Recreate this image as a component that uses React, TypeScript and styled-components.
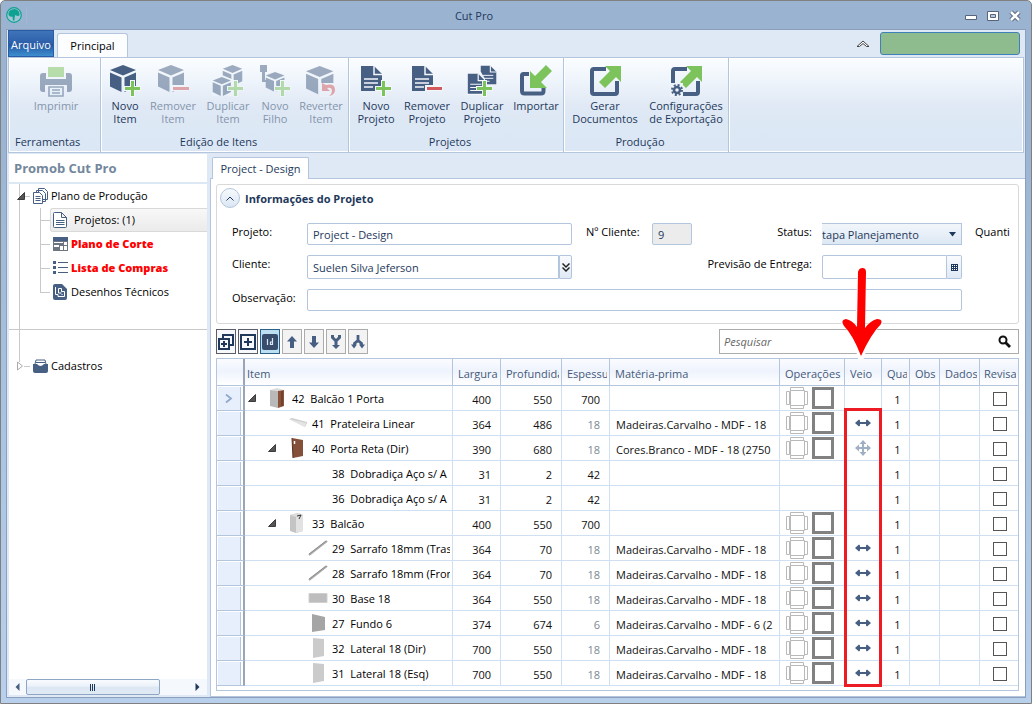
import React from "react";
import styled, { createGlobalStyle, css } from "styled-components";

const NAVY = "#465f82";
const GREEN = "#7cc35c";
const RED = "#d25a5e";
const INK = "#1e395b";
const LINE = "#b3c6de";
const CELL = "#cfe0f3";

const Global = createGlobalStyle`
  * { box-sizing: border-box; }
  body { margin: 0; font: 11px/16px "Open Sans", "Noto Sans", sans-serif; color: #000; }
  button, input, select { font: inherit; color: inherit; margin: 0; padding: 0; }
  button { background: none; border: 0; }
  svg { display: block; flex: none; }
`;

/* ---------- window frame ---------- */

const Window = styled.div`
  min-height: 100vh;
  display: flex;
  flex-direction: column;
  border: 1px solid #808080;
  border-radius: 5px 5px 0 0;
  background: linear-gradient(#9ab3d1, #9bb4d2 20%, #a9c3e0 60%, #b9d0ec);
`;

const TitleBar = styled.header`
  display: flex;
  align-items: center;
  height: 28px;
`;

const AppBadge = styled.div`
  width: 26px;
  padding-left: 5px;
  border-right: 1px solid #a3b9d3;
`;

const Title = styled.h1`
  flex: 1;
  margin: 2px 0 0;
  text-align: center;
  font-size: 11px;
  font-weight: 400;
  color: ${INK};
`;

const WindowButtons = styled.div`
  width: 110px;
  display: flex;
  justify-content: flex-end;
  gap: 8px;
  padding: 2px 9px 0 0;
  button { display: flex; }
`;

const Client = styled.div`
  flex: 1;
  display: flex;
  flex-direction: column;
  margin: 0 5px 5px;
  border: 1px solid #8c9fbe;
  background: #dfe9f5;
`;

/* ---------- ribbon ---------- */

const TabStrip = styled.nav`
  display: flex;
  height: 27px;
  padding: 0 5px 0 1px;
`;

const FileTab = styled.button`
  width: 46px;
  padding-top: 2px;
  border: 1px solid #2a5ca6;
  color: #fff;
  background: linear-gradient(#3e74b8, #2c5fa9 50%, #2453a0 52%, #3d8fce);
`;

const MainTab = styled.button`
  width: 71px;
  margin: 3px 0 0 3px;
  border: 1px solid ${LINE};
  border-bottom: 0;
  border-radius: 3px 3px 0 0;
  background: #fcfdff;
`;

const Chevron = styled.button`
  display: flex;
  align-self: center;
  margin: 0 10px 0 auto;
`;

const StatusBox = styled.div`
  width: 140px;
  height: 23px;
  margin-top: 2px;
  border: 1px solid #3f80b8;
  border-radius: 3px;
  background: #8fbc8f;
`;

const Ribbon = styled.div`
  display: flex;
  height: 96px;
  margin: 0 1px;
  border: 1px solid ${LINE};
  box-shadow: inset 0 0 0 1px #fff;
  background: linear-gradient(#fbfdff, #eef4fb 25%, #e0e9f5 50%, #dde8f5 70%, #dbe7f5);
`;

const Group = styled.section<{ $w: number }>`
  width: ${(p) => p.$w}px;
  display: flex;
  flex-direction: column;
  border-right: 1px solid ${LINE};
  box-shadow: 1px 0 #fff;
`;

const GroupButtons = styled.div`
  flex: 1;
  display: flex;
  gap: 2px;
  padding-left: 4px;
`;

const GroupName = styled.h2<{ $left?: boolean }>`
  margin: 0;
  padding: ${(p) => (p.$left ? "0 0 2px 6px" : "0 12px 2px 0")};
  text-align: ${(p) => (p.$left ? "left" : "center")};
  font-size: 11px;
  line-height: 16px;
  font-weight: 400;
  color: ${INK};
`;

const Tool = styled.button<{ $w: number }>`
  width: ${(p) => p.$w}px;
  flex: none;
  display: flex;
  flex-direction: column;
  align-items: center;
  padding-top: 7px;
  line-height: 13px;
  color: ${INK};
  white-space: pre;
  text-align: center;
  &:disabled { color: #8595ab; }
  &:disabled svg { opacity: 0.5; }
  span { padding-top: 2px; }
`;

/* ---------- side tree ---------- */

const Work = styled.div`
  flex: 1;
  display: flex;
`;

const Side = styled.aside`
  width: 198px;
  flex: none;
  margin: 1px 3px 2px 2px;
  display: flex;
  flex-direction: column;
  background: #fff;
`;

const SideTitle = styled.h2`
  margin: 0;
  height: 30px;
  padding-left: 5px;
  border-bottom: 2px solid #dde8f5;
  font-size: 13px;
  line-height: 28px;
  font-weight: 700;
  color: #73879c;
`;

const Tree = styled.ul`
  list-style: none;
  margin: 0;
  padding: 0;
  flex: 1;
`;

const guide = "linear-gradient(#c9c9c9, #c9c9c9)";

const TreeRoot = styled.li<{ $last?: boolean }>`
  ${(p) =>
    p.$last
      ? css`
          padding-top: 24px;
          background: ${guide} 10px 0 / 1px 32px no-repeat;
        `
      : css`
          height: 146px;
          border-bottom: 1px solid #c9c9c9;
          background: ${guide} 10px 0 / 1px 100% no-repeat;
        `}
`;

const RootRow = styled.div`
  display: flex;
  align-items: center;
  height: 24px;
  padding-left: 8px;
  gap: 3px;
`;

const Twig = styled.button`
  display: flex;
  align-items: center;
  width: 13px;
  height: 16px;
  background: ${guide} 100% 50% / 6px 1px no-repeat;
`;

const Branch = styled.ul`
  list-style: none;
  margin: 0;
  padding: 0 0 0 31px;
`;

const Leaf = styled.li<{ $end?: boolean }>`
  display: flex;
  height: 24px;
  padding-left: 10px;
  background: ${guide} 0 0 / 1px ${(p) => (p.$end ? "12px" : "100%")} no-repeat,
    ${guide} 0 50% / 10px 1px no-repeat;
`;

const LeafLink = styled.a<{ $on?: boolean; $alert?: boolean }>`
  flex: 1;
  display: flex;
  align-items: center;
  gap: ${(p) => (p.$on ? 6 : 3)}px;
  padding-left: 2px;
  border: 1px solid transparent;
  border-right: 0;
  border-radius: 3px 0 0 3px;
  text-decoration: none;
  color: #000;
  ${(p) => p.$alert && css`color: #f00; font-weight: 800;`}
  ${(p) => p.$on && css`border-color: #d9d9d9; background: linear-gradient(#f8f8f8, #ebebeb);`}
`;

const ScrollBar = styled.div`
  display: flex;
  align-items: center;
  height: 16px;
  padding: 0 7px 0 6px;
  background: #f5f8fd;
`;

const ScrollThumb = styled.div`
  width: 134px;
  height: 16px;
  margin: 0 auto 0 6px;
  display: flex;
  justify-content: center;
  align-items: center;
  border: 1px solid #8fa5c4;
  border-radius: 2px;
  background: linear-gradient(#fafcff, #eaf1f9 45%, #dce7f3 50%, #e0eaf5);
`;

/* ---------- main panel ---------- */

const Main = styled.main`
  flex: 1;
  min-width: 0;
  display: flex;
  flex-direction: column;
`;

const DocTabs = styled.div`
  display: flex;
  height: 26px;
  padding: 4px 0 0 2px;
  border-bottom: 1px solid ${LINE};
`;

const DocTab = styled.button`
  height: 22px;
  width: 97px;
  border: 1px solid ${LINE};
  border-bottom: 0;
  border-radius: 2px 2px 0 0;
  background: #fff;
  color: ${INK};
`;

const Page = styled.div`
  position: relative;
  flex: 1;
  padding: 5px 6px 5px 5px;
  border-left: 1px solid ${LINE};
  border-bottom: 1px solid ${LINE};
  background: #fff;
`;

const Card = styled.section`
  border: 1px solid #d9d9d9;
  border-radius: 3px;
  padding: 0 7px 12px 15px;
`;

const CardHead = styled.div`
  display: flex;
  align-items: center;
  gap: 5px;
  height: 26px;
  margin: 0 0 12px -12px;
  h2 { margin: 2px 0 0; font-size: 11px; font-weight: 700; color: ${INK}; }
`;

const Round = styled.button`
  display: flex;
  align-items: center;
  justify-content: center;
  width: 20px;
  height: 20px;
  border: 1px solid ${LINE};
  border-radius: 50%;
  background: linear-gradient(#f7fafd, #dbe6f3);
`;

const Form = styled.form`
  display: grid;
  grid-template-columns: 75px minmax(0, 1fr) 80px 40px 130px 140px 49px;
  grid-template-rows: 22px 24px 22px;
  row-gap: 10px;
`;

const Label = styled.label<{ $col?: number; $pad?: number; $right?: boolean }>`
  grid-column-start: ${(p) => p.$col ?? 1};
  padding-left: ${(p) => p.$pad ?? 0}px;
  padding-right: ${(p) => (p.$right ? 10 : 0)}px;
  text-align: ${(p) => (p.$right ? "right" : "left")};
  line-height: 18px;
  white-space: nowrap;
  overflow: hidden;
`;

const field = css`
  width: 100%;
  min-width: 0;
  height: 100%;
  border: 1px solid ${LINE};
  border-radius: 2px;
  background: #fff;
  color: ${INK};
  padding: 1px 5px 0;
  outline: 0;
`;

const Field = styled.input`
  ${field}
  &:read-only { background: #ececec; }
`;

const WideField = styled(Field)`
  grid-column: 2 / 7;
`;

const Split = styled.div`
  display: flex;
  ${Field} { flex: 1; border-radius: 2px 0 0 2px; }
`;

const SplitButton = styled.button<{ $w: number }>`
  width: ${(p) => p.$w}px;
  display: flex;
  align-items: center;
  justify-content: center;
  border: 1px solid ${LINE};
  border-left-width: ${(p) => (p.$w > 14 ? 0 : 1)}px;
  border-radius: 0 2px 2px 0;
  background: linear-gradient(#f9fbfe, #dfe9f5);
`;

const SelectBox = styled.div`
  display: flex;
  align-items: center;
  border: 1px solid ${LINE};
  border-left: 0;
  padding-right: 4px;
  background: linear-gradient(#f2f6fb, #dde8f4);
`;

const Select = styled.select`
  flex: 1;
  min-width: 0;
  height: 20px;
  padding-top: 2px;
  border: 0;
  outline: 0;
  appearance: none;
  background: none;
  color: ${INK};
  text-indent: -6px;
  overflow: hidden;
`;

const ToolRow = styled.div`
  display: flex;
  gap: 2px;
  height: 25px;
  margin: 5px 0 4px;
`;

const Square = styled.button<{ $kind: "dark" | "on" | "soft" }>`
  display: flex;
  align-items: center;
  justify-content: center;
  width: 20px;
  border: 1px solid ${(p) => ({ dark: "#5d5d66", on: "#2b6088", soft: "#acacac" })[p.$kind]};
  background: ${(p) => ({ dark: "#f6f8fb", on: "#bcdff2", soft: "#f3f3f3" })[p.$kind]};
`;

const Search = styled.label`
  display: flex;
  align-items: center;
  width: 300px;
  margin-left: auto;
  padding: 0 7px 0 4px;
  border: 1px solid #acacac;
  input { flex: 1; min-width: 0; border: 0; outline: 0; background: none; font-style: italic; }
  input::placeholder { color: #666; opacity: 1; }
`;

/* ---------- grid ---------- */

const GridBox = styled.div`
  position: relative;
  border: 1px solid ${LINE};
  padding-bottom: 4px;
`;

const Table = styled.table`
  width: 100%;
  table-layout: fixed;
  border-collapse: separate;
  border-spacing: 0;
`;

const Th = styled.th<{ $first?: boolean }>`
  height: 27px;
  padding: 4px 2px 0 ${(p) => (p.$first ? 2 : 5)}px;
  border-right: 1px solid ${LINE};
  border-bottom: 1px solid ${LINE};
  background: linear-gradient(#fbfcff, #eef3fd 45%, #fff);
  text-align: left;
  font-weight: 400;
  color: #44597a;
  white-space: nowrap;
  overflow: hidden;
  &:last-child { border-right: 0; padding-left: 4px; }
`;

const Td = styled.td<{ $align?: string; $dim?: boolean }>`
  height: 25px;
  padding: ${(p) => (p.$align === "right" ? "3px 9px 0 2px" : p.$align === "center" ? "3px 0 0 4px" : "3px 3px 0 6px")};
  border-right: 1px solid ${CELL};
  border-bottom: 1px solid ${CELL};
  text-align: ${(p) => p.$align ?? "left"};
  color: ${(p) => (p.$dim ? "#7c8794" : "#111")};
  white-space: nowrap;
  overflow: hidden;
  &:last-child { border-right: 0; }
`;

const Clip = styled.div`
  overflow: hidden;
`;

const MarkHead = styled(Th)`
  border-right: 2px solid #9aa5b8;
  padding: 0;
`;

const Mark = styled.td`
  padding: 1px 2px 0 1px;
  border-right: 2px solid #9aa5b8;
  border-bottom: 1px solid ${LINE};
  div {
    display: flex;
    align-items: center;
    justify-content: center;
    height: 23px;
    border-right: 1px solid ${LINE};
    background: #e7eefc;
  }
`;

const IconTd = styled(Td)`
  padding: 0 0 0 6px;
`;

const CenterTd = styled(Td)`
  padding: 0;
  svg { margin: 0 auto; }
`;

const CheckTd = styled(Td)`
  padding: 1px 0 0 13px;
`;

const IconPair = styled.div`
  display: flex;
  align-items: center;
  gap: 3px;
`;

const TreeTd = styled(Td)`
  padding: 0 2px 0 3px;
`;

const ItemCell = styled.div<{ $level: number }>`
  display: flex;
  align-items: center;
  height: 24px;
  padding-left: ${(p) => p.$level * 20}px;
  overflow: hidden;
  color: #000;
`;

const Slot = styled.span`
  display: flex;
  flex: none;
  width: 20px;
  align-items: center;
`;

const ItemName = styled.span<{ $bare?: boolean }>`
  padding: 2px 0 0 ${(p) => (p.$bare ? 44 : 4)}px;
  white-space: pre;
`;

const Check = styled.input`
  appearance: none;
  display: block;
  width: 14px;
  height: 14px;
  margin: 0;
  border: 1px solid #555;
  background: #fff;
`;

const Highlight = styled.div`
  position: absolute;
  right: 136px;
  top: 49px;
  bottom: 3px;
  width: 38px;
  border: 3px solid #ed1c24;
  pointer-events: none;
`;

const Pointer = styled.svg`
  position: absolute;
  right: 142px;
  top: 88px;
  pointer-events: none;
`;

/* ---------- drawings ---------- */

const Plus = ({ x, y }: { x: number; y: number }) => (
  <g transform={`translate(${x} ${y})`}>
    <path d="M5 -1h5v6h6v5h-6v6H5v-6H-1V5h6z" fill="#f3f7fc" />
    <path d="M6 0h3v6h6v3H9v6H6V9H0V6h6z" fill={GREEN} />
  </g>
);

const Cube = ({ x = 0, y = 0, s = 1 }) => (
  <g transform={`translate(${x} ${y}) scale(${s})`} fill={NAVY}>
    <path d="M14 0L27 5 14 10.500 1 5z" />
    <path d="M1 7.500L12.500 12.500V27L1 21.500z" />
    <path d="M27 7.500L15.500 12.500V27L27 21.500z" />
  </g>
);

const Doc = ({ x = 0, y = 0, s = 1 }) => (
  <g transform={`translate(${x} ${y}) scale(${s})`}>
    <path d="M1 1H14L22 9V26H1z" fill={NAVY} />
    <path d="M14 1V9.500H22" fill="none" stroke="#f3f7fc" strokeWidth="1.500" />
    <path d="M4 14H18M4 18H18M4 22H13" stroke="#f3f7fc" strokeWidth="1.300" />
  </g>
);

const Ico = ({ children }: { children: React.ReactNode }) => (
  <svg width="32" height="32" viewBox="0 0 32 32">{children}</svg>
);

const PrintIcon = () => (
  <Ico>
    <path d="M3 8h3v6h20V8h3q3 0 3 3v13q0 3-3 3h-2v-7H5v7H3q-3 0-3-3V11q0-3 3-3z" fill={NAVY} />
    <path d="M8 2h16v10H8z" fill={GREEN} />
    <path d="M9 22h14v9H9zM12 25h8M12 28h8" fill="none" stroke={NAVY} strokeWidth="1.600" />
  </Ico>
);
const NewItem = () => <Ico><Cube /><Plus x={16} y={16} /></Ico>;
const RemoveItem = () => <Ico><Cube /><path d="M14 20h18v6H14z" fill="#f3f7fc" /><path d="M16 22h16v3H16z" fill={RED} /></Ico>;
const DupItem = () => <Ico><Cube x={10} y={0} s={0.75} /><path d="M0 15L10 10l12 5v16H0z" fill="#f3f7fc" /><Cube x={0} y={12} s={0.7} /><Plus x={16} y={16} /></Ico>;
const ChildItem = () => <Ico><path d="M1 0h7v7H6v8h3v2H3V7H1z" fill={NAVY} /><Cube x={6} y={7} s={0.72} /><Plus x={16} y={16} /></Ico>;
const RevertItem = () => (
  <Ico><Cube y={1} s={1.05} /><path d="M15 18h15v14H15z" fill="#eef3fa" />
    <path d="M17 18v8h8l-3-3q5-1 5 3 0 3-3 5 6-1 6-6 0-7-9-5z" fill={RED} /></Ico>
);
const NewDoc = () => <Ico><Doc /><Plus x={16} y={16} /></Ico>;
const RemoveDoc = () => <Ico><Doc /><path d="M14 20h18v6H14z" fill="#f3f7fc" /><path d="M16 22h15v3H16z" fill={RED} /></Ico>;
const DupDoc = () => (
  <Ico><Doc x={14} y={0} s={0.74} /><path d="M1 7h14l4 7v16H1z" fill="#f3f7fc" /><Doc x={1} y={8} s={0.8} /><Plus x={11} y={16} /></Ico>
);
const ImportIcon = () => (
  <Ico>
    <path d="M9 9H3.500Q2 9 2 10.500V26Q2 28.500 4.500 28.500H21Q23.500 28.500 23.500 26V22" fill="none" stroke={NAVY} strokeWidth="4" />
    <path d="M26 0l6 6-11 11 6 6H10V6l5 5z" fill={GREEN} />
  </Ico>
);
const ExportIcon = ({ gear = false }) => (
  <Ico>
    <path d="M17 4H5Q3 4 3 6V27Q3 29 5 29H26Q28 29 28 27V16" fill="none" stroke={NAVY} strokeWidth="4" />
    <path d="M16 1H32V17l-5-5-11 11-6-6L21 6z" fill={GREEN} />
    {gear && (
      <>
        <path d="M0 18h13v14H0z" fill="#eef3fa" />
        <circle cx="7" cy="25" r="3" fill="none" stroke={NAVY} strokeWidth="2.500" />
        <circle cx="7" cy="25" r="5" fill="none" stroke={NAVY} strokeWidth="2" strokeDasharray="2 1.930" />
      </>
    )}
  </Ico>
);

const Caret = ({ open = false }) =>
  open ? (
    <svg width="8" height="8" viewBox="0 0 8 8"><path d="M7.500 0.500V7.500H0.500z" fill="#555" stroke="#222" strokeWidth=".8" /></svg>
  ) : (
    <svg width="7" height="10" viewBox="0 0 7 10"><path d="M.5 1v8L5.500 5z" fill="#fff" stroke="#aaa" /></svg>
  );

const Up = ({ flip = false }) => (
  <svg width="14" height="14" viewBox="0 0 14 14">
    <path transform={flip ? "rotate(180 7 7)" : undefined} d="M7 1l5 5.500H9V13H5V6.500H2z" fill={NAVY} />
  </svg>
);

const Merge = () => (
  <svg width="14" height="16" viewBox="0 0 14 16">
    <path d="M3.500 1v2.500L7 7v5M10.500 1v2.500L7 7" fill="none" stroke={NAVY} strokeWidth="3" />
    <path d="M3 11h8l-4 4z" fill={NAVY} />
  </svg>
);
const Fork = () => (
  <svg width="16" height="16" viewBox="0 0 16 16">
    <path d="M8 1v5.500L4.500 9.500v2M8 6.500l3.500 3v2" fill="none" stroke={NAVY} strokeWidth="2.800" />
    <path d="M1 10.500h6L4 14.500zM9 10.500h6L12 14.500z" fill={NAVY} />
  </svg>
);

const FrameIcon = () => (
  <svg width="23" height="22" viewBox="0 0 23 22" fill="#fff" stroke="#b9b9b9">
    <path d="M4.500 3.500h14v15h-14zM4.500 .5h13v3h-13zM4.500 18.500h13v3h-13zM.5 4.500h3v13h-3zM18.500 4.500h3v13h-3z" />
  </svg>
);
const SquareIcon = () => (
  <svg width="22" height="22" viewBox="0 0 22 22">
    <path d="M1.500 1.500h19v19h-19z" fill="#fff" stroke="#818181" strokeWidth="3" />
  </svg>
);
const Horizontal = () => (
  <svg width="16" height="8" viewBox="0 0 16 8">
    <path d="M0 4L4 .5 5 1.500V3h6V1.500L12 .5 16 4 12 7.500 11 6.500V5H5v1.500L4 7.500z" fill={NAVY} />
  </svg>
);
const FourWay = () => (
  <svg width="16" height="16" viewBox="0 0 16 16">
    <path d="M8 0l3.500 4H9v3h3V4.500L16 8l-4 3.500V9H9v3h2.500L8 16l-3.500-4H7V9H4v2.500L0 8l4-3.500V7h3V4H4.500z" fill="#9fb0c4" />
  </svg>
);

type ThumbKind = "cabinet" | "shelf" | "door" | "body" | "bar" | "base" | "back" | "side";

const Thumb = ({ kind }: { kind: ThumbKind }) => (
  <svg width="20" height="22" viewBox="0 0 20 22">
    {kind === "cabinet" && (<><path d="M2 3l7-2 7 2-6 1z" fill="#ddd" /><path d="M2 3l8 1v17l-8-2z" fill="#b9b9b9" /><path d="M10 4l6-1v16l-6 2z" fill="#8a5238" /><path d="M14 4v15" stroke="#5d3322" /></>)}
    {kind === "shelf" && (<><path d="M1 7l3-1 15 4v1l-2 4z" fill="#cfcfcf" /><path d="M1 7l17 4-1 4z" fill="#e4e4e4" /></>)}
    {kind === "door" && (<><path d="M4 1l11 2v16L5 21z" fill="#855039" /><path d="M4 1l1 20" stroke="#59301f" /><path d="M6.500 4v3" stroke="#fff" strokeWidth="1.500" /></>)}
    {kind === "body" && (<><path d="M2 3l8-2 5 2v16l-7 2-6-2z" fill="#c4c4c4" /><path d="M8 5l7-2v16l-7 2z" fill="#e2e2e2" /><path d="M2 3l8-2 5 2-7 2z" fill="#ddd" /><path d="M9 4l4-1-2 4" fill="none" stroke="#333" /></>)}
    {kind === "bar" && (<><path d="M1 18L19 4" stroke="#a8a8a8" strokeWidth="2.200" /><path d="M1 17L18 4" stroke="#868686" strokeWidth=".8" /></>)}
    {kind === "base" && <path d="M1 6.500h18v9H1z" fill="#bdbdbd" stroke="#cfcfcf" />}
    {kind === "back" && <path d="M4 2l13 3v13L4 20z" fill="#a5a5a5" />}
    {kind === "side" && <path d="M5 1l11 1v17L5 21z" fill="#cbcbcb" />}
  </svg>
);

/* ---------- data ---------- */

type Row = {
  level: number; text: string; open?: boolean; thumb?: ThumbKind;
  w: number; d: number; t: number; dim?: boolean; mat?: string; ops?: boolean; grain?: "h" | "x";
};

const OAK = "Madeiras.Carvalho - MDF - 18";
const rows: Row[] = [
  { level: 0, text: "42  Balcão 1 Porta", open: true, thumb: "cabinet", w: 400, d: 550, t: 700, ops: true },
  { level: 1, text: "41  Prateleira Linear", thumb: "shelf", w: 364, d: 486, t: 18, dim: true, mat: OAK, ops: true, grain: "h" },
  { level: 1, text: "40  Porta Reta (Dir)", open: true, thumb: "door", w: 390, d: 680, t: 18, dim: true, mat: "Cores.Branco - MDF - 18 (2750", ops: true, grain: "x" },
  { level: 2, text: "38  Dobradiça Aço s/ A", w: 31, d: 2, t: 42 },
  { level: 2, text: "36  Dobradiça Aço s/ A", w: 31, d: 2, t: 42 },
  { level: 1, text: "33  Balcão", open: true, thumb: "body", w: 400, d: 550, t: 700, ops: true },
  { level: 2, text: "29  Sarrafo 18mm (Tras", thumb: "bar", w: 364, d: 70, t: 18, dim: true, mat: OAK, ops: true, grain: "h" },
  { level: 2, text: "28  Sarrafo 18mm (Fron", thumb: "bar", w: 364, d: 70, t: 18, dim: true, mat: OAK, ops: true, grain: "h" },
  { level: 2, text: "30  Base 18", thumb: "base", w: 364, d: 550, t: 18, dim: true, mat: OAK, ops: true, grain: "h" },
  { level: 2, text: "27  Fundo 6", thumb: "back", w: 374, d: 674, t: 6, dim: true, mat: "Madeiras.Carvalho - MDF - 6 (2", ops: true, grain: "h" },
  { level: 2, text: "32  Lateral 18 (Dir)", thumb: "side", w: 700, d: 550, t: 18, dim: true, mat: OAK, ops: true, grain: "h" },
  { level: 2, text: "31  Lateral 18 (Esq)", thumb: "side", w: 700, d: 550, t: 18, dim: true, mat: OAK, ops: true, grain: "h" },
];

const columns: [string, number | undefined][] = [
  ["Item", 208], ["Largura", 48], ["Profundida", 61], ["Espessu", 48], ["Matéria-prima", undefined],
  ["Operações", 65], ["Veio", 37], ["Qua", 28], ["Obs", 30], ["Dados", 40], ["Revisa", 38],
];

type ToolDef = [string, number, () => React.ReactElement, boolean?];
const groups: { name: string; w: number; left?: boolean; tools: ToolDef[] }[] = [
  { name: "Ferramentas", w: 92, left: true, tools: [["Imprimir", 86, PrintIcon, true]] },
  {
    name: "Edição de Itens", w: 248,
    tools: [["Novo\nItem", 40, NewItem], ["Remover\nItem", 52, RemoveItem, true], ["Duplicar\nItem", 54, DupItem, true],
      ["Novo\nFilho", 36, ChildItem, true], ["Reverter\nItem", 52, RevertItem, true]],
  },
  {
    name: "Projetos", w: 215,
    tools: [["Novo\nProjeto", 46, NewDoc], ["Remover\nProjeto", 52, RemoveDoc], ["Duplicar\nProjeto", 54, DupDoc], ["Importar", 50, ImportIcon]],
  },
  {
    name: "Produção", w: 165,
    tools: [["Gerar\nDocumentos", 74, () => <ExportIcon />], ["Configurações\nde Exportação", 84, () => <ExportIcon gear />]],
  },
];

/* ---------- sections ---------- */

const SideTree = () => (
  <Side>
    <SideTitle>Promob Cut Pro</SideTitle>
    <Tree>
      <TreeRoot>
        <RootRow>
          <Twig aria-label="Recolher"><Caret open /></Twig>
          <svg width="15" height="16" viewBox="0 0 15 16" fill="#fff" stroke={NAVY}>
            <path d="M5.500 .5h6l3 3v8h-9zM3.500 2.500h6l3 3v8h-9z" />
            <path d="M.5 4.500h6l3 3v8h-9zM2.500 8.500h5M2.500 10.500h5M2.500 12.500h5" />
          </svg>
          <span>Plano de Produção</span>
        </RootRow>
        <Branch>
          <Leaf>
            <LeafLink href="#projetos" $on>
              <svg width="15" height="16" viewBox="0 0 15 16" fill="#fff" stroke={NAVY}>
                <path d="M.5 1.500q0-1 1-1h7l5 5v9q0 1-1 1h-11q-1 0-1-1zM8.500 .5v5h5M3 8.500h8.500M3 10.500h8.500M3 12.500h8.500" />
              </svg>
              Projetos: (1)
            </LeafLink>
          </Leaf>
          <Leaf>
            <LeafLink href="#corte" $alert>
              <svg width="15" height="14" viewBox="0 0 15 14">
                <path d="M0 0h15v14H0z" fill="#6d7580" />
                <path d="M0 0h15v4H0z" fill={NAVY} />
                <path d="M1 5h9v1H1zM11 5h3v3h-3zM1 8h5v2H1zM7 9h3v4H7zM11 9h3v4h-3z" fill="#fff" />
              </svg>
              Plano de Corte
            </LeafLink>
          </Leaf>
          <Leaf>
            <LeafLink href="#compras" $alert>
              <svg width="15" height="14" viewBox="0 0 15 14">
                <path d="M0 0h3v3H0zM0 5h3v3H0zM0 10h3v3H0zM5 1h10v1H5zM5 6h10v1H5zM5 11h10v1H5z" fill={NAVY} />
              </svg>
              Lista de Compras
            </LeafLink>
          </Leaf>
          <Leaf $end>
            <LeafLink href="#desenhos">
              <svg width="15" height="16" viewBox="0 0 15 16">
                <path d="M0 2q0-2 2-2h7l5 5v9q0 2-2 2H2q-2 0-2-2z" fill={NAVY} />
                <path d="M2.500 3v7.500H5v2h6.500v-5H8.500V4.500H5.500v4.500h3M8.500 10.500h1" fill="none" stroke="#fff" />
              </svg>
              Desenhos Técnicos
            </LeafLink>
          </Leaf>
        </Branch>
      </TreeRoot>
      <TreeRoot $last>
        <RootRow>
          <Twig aria-label="Expandir"><Caret /></Twig>
          <svg width="15" height="14" viewBox="0 0 15 14">
            <path d="M2 5l1-4h9l1 4" fill="#fff" stroke={NAVY} /><path d="M0 5h4q3.500 4 7 0h4v7q0 2-2 2H2q-2 0-2-2z" fill={NAVY} />
            <path d="M3 3.500h9" stroke={NAVY} />
          </svg>
          <span>Cadastros</span>
        </RootRow>
      </TreeRoot>
    </Tree>
    <ScrollBar>
      <svg width="5" height="8" viewBox="0 0 5 8"><path d="M4.500 0v8L.5 4z" fill="#47607f" /></svg>
      <ScrollThumb>
        <svg width="6" height="7" viewBox="0 0 6 7"><path d="M.5 0v7M2.500 0v7M4.500 0v7" stroke={INK} /></svg>
      </ScrollThumb>
      <svg width="5" height="8" viewBox="0 0 5 8"><path d="M.5 0v8l4-4z" fill={INK} /></svg>
    </ScrollBar>
  </Side>
);

const ProjectCard = () => (
  <Card>
    <CardHead>
      <Round aria-label="Recolher">
        <svg width="8" height="5" viewBox="0 0 8 5"><path d="M.5 4.500L4 1l3.500 3.500" fill="none" stroke={INK} /></svg>
      </Round>
      <h2>Informações do Projeto</h2>
    </CardHead>
    <Form>
      <Label htmlFor="projeto">Projeto:</Label>
      <Field id="projeto" defaultValue="Project - Design" />
      <Label htmlFor="numero" $col={3} $pad={14}>Nº Cliente:</Label>
      <Field id="numero" value="9" readOnly />
      <Label htmlFor="status" $col={5} $right>Status:</Label>
      <SelectBox>
        <Select id="status"><option>Etapa Planejamento</option></Select>
        <svg width="9" height="5" viewBox="0 0 9 5"><path d="M1 0h7L4.500 4.500z" fill={INK} /></svg>
      </SelectBox>
      <Label as="span" $col={7} $pad={13}>Quanti</Label>

      <Label htmlFor="cliente">Cliente:</Label>
      <Split>
        <Field id="cliente" defaultValue="Suelen Silva Jeferson" />
        <SplitButton type="button" $w={13} aria-label="Abrir">
          <svg width="8" height="9" viewBox="0 0 8 9"><path d="M.5 .5L4 4 7.500 .5M.5 4.500L4 8l3.500-3.500" fill="none" stroke="#222" strokeWidth="1.500" /></svg>
        </SplitButton>
      </Split>
      <Label htmlFor="entrega" $col={5} $right>Previsão de Entrega:</Label>
      <Split>
        <Field id="entrega" />
        <SplitButton type="button" $w={15} aria-label="Calendário">
          <svg width="7" height="7" viewBox="0 0 7 7"><path d="M0 0h7v7H0z" fill={INK} /><path d="M1 1h1v1H1zM3 1h1v1H3zM5 1h1v1H5zM1 3h1v1H1zM3 3h1v1H3zM5 3h1v1H5zM1 5h1v1H1zM3 5h1v1H3zM5 5h1v1H5z" fill="#fff" /></svg>
        </SplitButton>
      </Split>

      <Label htmlFor="obs">Observação:</Label>
      <WideField id="obs" />
    </Form>
  </Card>
);

const Tools = () => (
  <ToolRow>
    <Square $kind="dark" aria-label="Expandir tudo">
      <svg width="16" height="16" viewBox="0 0 16 16" fill="none" stroke={INK} strokeWidth="2">
        <path d="M5 4V1h10v10h-3M1 5h10v10H1zM6 7v6M3 10h6" />
      </svg>
    </Square>
    <Square $kind="dark" aria-label="Expandir">
      <svg width="16" height="16" viewBox="0 0 16 16" fill="none" stroke={INK} strokeWidth="2">
        <path d="M1 1h14v14H1zM8 4v8M4 8h8" />
      </svg>
    </Square>
    <Square $kind="on" aria-label="Id">
      <svg width="16" height="16" viewBox="0 0 16 16">
        <rect width="16" height="16" rx="2" fill="#374d6b" />
        <path d="M5.500 5v6M10.500 4v7M10.500 8H8.500v2.500h2" fill="none" stroke="#dce6f2" strokeWidth="1.200" />
      </svg>
    </Square>
    <Square $kind="soft" aria-label="Subir"><Up /></Square>
    <Square $kind="soft" aria-label="Descer"><Up flip /></Square>
    <Square $kind="soft" aria-label="Juntar"><Merge /></Square>
    <Square $kind="soft" aria-label="Separar"><Fork /></Square>
    <Search>
      <input placeholder="Pesquisar" aria-label="Pesquisar" />
      <svg width="13" height="13" viewBox="0 0 13 13" fill="none" stroke="#111">
        <circle cx="5" cy="5" r="3.500" strokeWidth="2" /><path d="M7.500 7.500L12 12" strokeWidth="2.800" />
      </svg>
    </Search>
  </ToolRow>
);

const ItemGrid = () => (
  <GridBox>
    <Table>
      <colgroup>
        <col style={{ width: 28 }} />
        {columns.map(([name, w]) => <col key={name} style={{ width: w }} />)}
      </colgroup>
      <thead>
        <tr>
          <MarkHead />
          {columns.map(([name], i) => <Th key={name} $first={i === 0}><Clip>{name}</Clip></Th>)}
        </tr>
      </thead>
      <tbody>
        {rows.map((r, i) => (
          <tr key={r.text}>
            <Mark>
              <div>{i === 0 && <svg width="8" height="9" viewBox="0 0 8 9"><path d="M1 .5l5 4-5 4" fill="none" stroke="#8fa9cb" strokeWidth="1.800" /></svg>}</div>
            </Mark>
            <TreeTd>
              <ItemCell $level={r.level}>
                {r.thumb && <Slot>{r.open && <Caret open />}</Slot>}
                {r.thumb && <Slot><Thumb kind={r.thumb} /></Slot>}
                <ItemName $bare={!r.thumb}>{r.text}</ItemName>
              </ItemCell>
            </TreeTd>
            <Td $align="right">{r.w}</Td>
            <Td $align="right">{r.d}</Td>
            <Td $align="right" $dim={r.dim}>{r.t}</Td>
            <Td><Clip>{r.mat}</Clip></Td>
            <IconTd>{r.ops && <IconPair><FrameIcon /><SquareIcon /></IconPair>}</IconTd>
            <CenterTd>{r.grain === "h" ? <Horizontal /> : r.grain ? <FourWay /> : null}</CenterTd>
            <Td $align="center">1</Td>
            <Td />
            <Td />
            <CheckTd><Check type="checkbox" aria-label={`Revisado ${r.text}`} /></CheckTd>
          </tr>
        ))}
      </tbody>
    </Table>
    <Highlight />
  </GridBox>
);

export default function App() {
  return (
    <Window>
      <Global />
      <TitleBar>
        <AppBadge>
          <svg width="16" height="16" viewBox="0 0 16 16">
            <circle cx="8" cy="8" r="7.300" fill="#a3c6d6" stroke="#0fa292" strokeWidth="1.200" />
            <path d="M2.500 8Q2 3.500 6 2.500q4-1.500 6.500 1.500 1.500 2 1 4.500-2 1-4-.500-1 1-1 5.500H7l-.500-4Q4 10.500 2.500 8z" fill="#0fa292" />
          </svg>
        </AppBadge>
        <Title>Cut Pro</Title>
        <WindowButtons>
          <button aria-label="Minimizar"><svg width="14" height="12" viewBox="0 0 14 12"><path d="M1.500 5.500h11v4h-11z" fill="#fff" stroke="#56657c" /></svg></button>
          <button aria-label="Maximizar"><svg width="14" height="12" viewBox="0 0 14 12"><path d="M1.500 1.500h11v9h-11z" fill="#fff" stroke="#56657c" /><path d="M4.500 4.500h5v3h-5z" fill="#b9c9dd" stroke="#56657c" /></svg></button>
          <button aria-label="Fechar"><svg width="14" height="12" viewBox="0 0 14 12"><path d="M3 2l8 8M11 2l-8 8" stroke="#56657c" strokeWidth="4.500" /><path d="M3 2l8 8M11 2l-8 8" stroke="#fff" strokeWidth="2.500" /></svg></button>
        </WindowButtons>
      </TitleBar>
      <Client>
        <TabStrip>
          <FileTab>Arquivo</FileTab>
          <MainTab>Principal</MainTab>
          <Chevron aria-label="Recolher faixa">
            <svg width="14" height="8" viewBox="0 0 14 8"><path d="M1 6.500L7 1l6 5.500h-2.500L7 3.500 3.500 6.500z" fill="#fff" stroke="#444" /></svg>
          </Chevron>
          <StatusBox />
        </TabStrip>
        <Ribbon>
          {groups.map((g) => (
            <Group key={g.name} $w={g.w}>
              <GroupButtons>
                {g.tools.map(([label, w, Icon, off]) => (
                  <Tool key={label} $w={w} disabled={off}><Icon /><span>{label}</span></Tool>
                ))}
              </GroupButtons>
              <GroupName $left={g.left}>{g.name}</GroupName>
            </Group>
          ))}
        </Ribbon>
        <Work>
          <SideTree />
          <Main>
            <DocTabs><DocTab>Project - Design</DocTab></DocTabs>
            <Page>
              <ProjectCard />
              <Tools />
              <ItemGrid />
              <Pointer width="42" height="92" viewBox="0 0 42 92">
                <path d="M21 4L19 62M4 55q10 6 16 30Q26 64 38 54" fill="none" stroke="#fff" strokeWidth="9" strokeLinecap="round" />
                <path d="M17 5q1-4 4.500-4T25 5l-1 56q5-7 12-9 6 0 4 5Q30 67 20 89 12 68 3 59-1 53 5 52q6 1 11 8z" fill="#fe0000" />
              </Pointer>
            </Page>
          </Main>
        </Work>
      </Client>
    </Window>
  );
}
